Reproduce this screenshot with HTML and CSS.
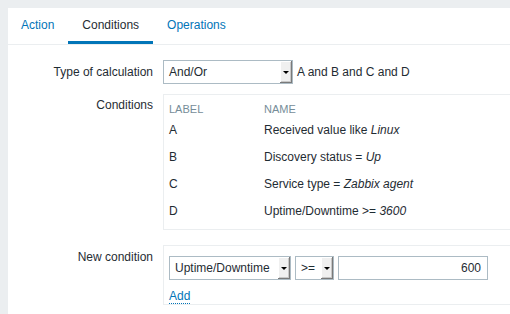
FILE: index.html
```html
<!DOCTYPE html>
<html lang="en">
<head>
<meta charset="utf-8" />
<title>Action — Conditions</title>
<link rel="stylesheet" href="styles.css">
</head>
<body>
<div class="panel">

  <!-- ===== tabs ===== -->
  <ul class="tabs">
    <li><a href="#">Action</a></li>
    <li class="active"><a href="#">Conditions</a></li>
    <li><a href="#">Operations</a></li>
  </ul>

  <!-- ===== form ===== -->
  <div class="form">
    <div class="row calc">
      <label class="lbl">Type of calculation</label>
      <div class="field">
        <div class="select wide"><span class="val">And/Or</span><span class="arrow"></span></div>
        <span class="formula">A and B and C and D</span>
      </div>
    </div>

    <div class="row conds">
      <label class="lbl">Conditions</label>
      <div class="box">
        <table class="list">
          <thead>
            <tr><th class="c1">Label</th><th>Name</th></tr>
          </thead>
          <tbody>
            <tr><td class="c1">A</td><td>Received value like <em>Linux</em></td></tr>
            <tr><td class="c1">B</td><td>Discovery status = <em>Up</em></td></tr>
            <tr><td class="c1">C</td><td>Service type = <em>Zabbix agent</em></td></tr>
            <tr><td class="c1">D</td><td>Uptime/Downtime &gt;= <em>3600</em></td></tr>
          </tbody>
        </table>
      </div>
    </div>

    <div class="row newcond">
      <label class="lbl">New condition</label>
      <div class="box inner">
        <div class="controls">
          <div class="select type"><span class="val">Uptime/Downtime</span><span class="arrow"></span></div>
          <div class="select op"><span class="val">&gt;=</span><span class="arrow"></span></div>
          <div class="input">600</div>
        </div>
        <a class="add" href="#">Add</a>
      </div>
    </div>
  </div>

</div>
</body>
</html>
```

FILE: styles.css
```css
/* ===== base ===== */
*{box-sizing:border-box}
html,body{margin:0;height:100%}
body{
  background:#ebeef0; color:#1f2c33;
  font:400 12px/14px "Liberation Sans", Arial, sans-serif;
  padding:8px 0 0 8px; overflow:hidden;
}
a{color:#0275b8;text-decoration:none}

.panel{background:#fff;min-height:100%}

/* ===== tabs ===== */
.tabs{
  list-style:none; margin:0; padding:0;
  display:flex; gap:1px; height:37px;
  border-bottom:1px solid #ebeef0;
}
.tabs li{padding:0 13px; line-height:34px; border-bottom:3px solid transparent}
.tabs li.active{border-bottom-color:#0275b8; padding:0 14px}
.tabs li.active a{color:#1f2c33}

/* ===== form rows ===== */
.form{padding-top:15px}
.row{display:flex; gap:10px}
.lbl{width:145px; flex:none; text-align:right}

.calc{margin-bottom:10px}
.calc .lbl{line-height:24px}
.field{display:flex; align-items:center; gap:4px}

.conds .lbl{padding-top:4px}
.newcond{margin-top:15px}
.newcond .lbl{padding-top:5px}

.box{
  flex:1; border:1px solid #ebeef0; border-right:0;
}

/* ===== conditions list ===== */
.list{border-collapse:collapse; margin-left:5px}
.list th{
  text-align:left; font-weight:400; text-transform:uppercase;
  color:#768d99; font-size:11px; padding:7px 0 0; height:21px; vertical-align:top;
}
.list td{height:27px; padding:0; vertical-align:middle}
.list .c1{width:95px}
.conds .box{padding-bottom:5px}

/* ===== selects / inputs ===== */
.select{
  display:flex; height:24px; border:1px solid #acbbc4; background:#fff;
}
.select .val{flex:1; padding-left:5px; line-height:22px; white-space:nowrap; overflow:hidden}
.select .arrow{
  width:12px; flex:none; position:relative; background:#f0f0f0;
  box-shadow:inset -1px -1px #7a7a7a, inset 1px 1px #fff, inset -2px -2px #c8c8c8;
}
.select .arrow::after{
  content:""; position:absolute; left:3px; top:10px;
  border-left:3px solid transparent; border-right:3px solid transparent;
  border-top:3px solid #000;
}
.select.wide{width:130px}
.formula{white-space:nowrap}

.inner{padding:10px 5px 0}
.controls{display:flex; gap:4px}
.select.type{width:122px}
.select.op{width:39px}
.input{
  width:150px; height:24px; border:1px solid #acbbc4;
  text-align:right; line-height:22px; padding-right:6px;
}
.add{
  display:inline-block; margin-top:10px;
  border-bottom:1px dotted #0275b8; line-height:13px;
}
```
